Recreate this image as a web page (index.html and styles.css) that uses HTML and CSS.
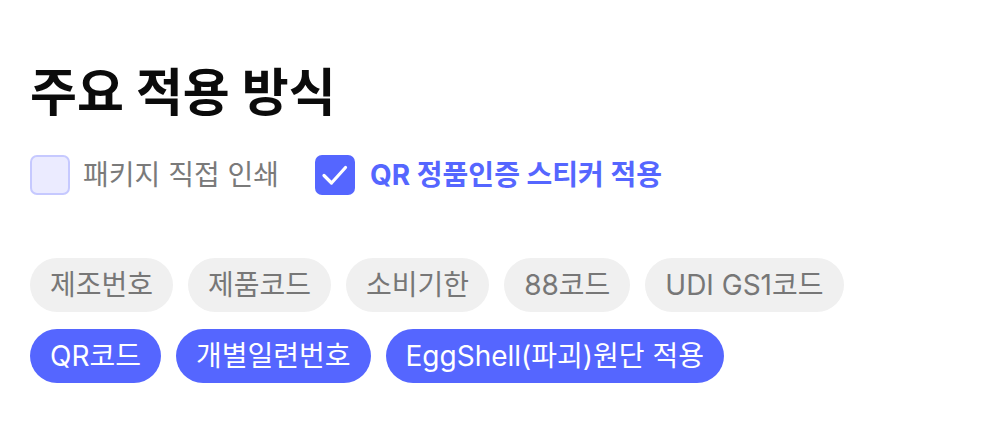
FILE: index.html
```html
<!DOCTYPE html>
<html lang="ko">
<head>
<meta charset="utf-8">
<link rel="stylesheet" href="styles.css">
</head>
<body>
<section class="panel">
  <h2 class="title">주요 적용 방식</h2>
  <div class="options">
    <label class="option">
      <span class="box"></span>
      <span class="opt-label">패키지 직접 인쇄</span>
    </label>
    <label class="option checked">
      <span class="box">
        <svg viewBox="0 0 40 40" width="40" height="40"><path d="M9 20.5 L16.5 28 L30.5 12.5" fill="none" stroke="#fff" stroke-width="3.2" stroke-linecap="round" stroke-linejoin="round"/></svg>
      </span>
      <span class="opt-label">QR 정품인증 스티커 적용</span>
    </label>
  </div>
  <div class="tags">
    <div class="tag-row">
      <span class="tag">제조번호</span>
      <span class="tag">제품코드</span>
      <span class="tag">소비기한</span>
      <span class="tag">88코드</span>
      <span class="tag">UDI GS1코드</span>
    </div>
    <div class="tag-row">
      <span class="tag on">QR코드</span>
      <span class="tag on">개별일련번호</span>
      <span class="tag on">EggShell(파괴)원단 적용</span>
    </div>
  </div>
</section>
</body>
</html>
```
FILE: styles.css
```css
* { box-sizing: border-box; margin: 0; padding: 0; }
body {
  background: #fff;
  font-family: Inter, "Noto Sans CJK KR", sans-serif;
  color: #111;
}
.panel {
  padding: 59px 30px 0;
}
.title {
  font-size: 51px;
  font-weight: 700;
  line-height: 68px;
  color: #0b0b0b;
  letter-spacing: 0;
}
.options {
  display: flex;
  align-items: center;
  gap: 36px;
  margin-top: 28px;
}
.option {
  display: flex;
  align-items: center;
  gap: 13px;
}
.box {
  width: 40px;
  height: 40px;
  border-radius: 7px;
  background: #ebebff;
  border: 2px solid #c6c9ff;
  display: flex;
  align-items: center;
  justify-content: center;
}
.box svg { display: block; }
.checked .box {
  background: #5566ff;
  border: none;
}
.opt-label {
  font-size: 28px;
  line-height: 40px;
  color: #7a7a7a;
}
.checked .opt-label {
  color: #5566ff;
  font-weight: 700;
  margin-left: 2px;
}
.tags {
  display: flex;
  flex-direction: column;
  gap: 17px;
  margin-top: 63px;
}
.tag-row {
  display: flex;
  gap: 15px;
}
.tag {
  height: 54px;
  padding: 0 20px;
  border-radius: 27px;
  background: #f0f0f0;
  color: #777;
  font-size: 28px;
  line-height: 54px;
  white-space: nowrap;
}
.tag.on {
  background: #5566ff;
  color: #fff;
}
```
